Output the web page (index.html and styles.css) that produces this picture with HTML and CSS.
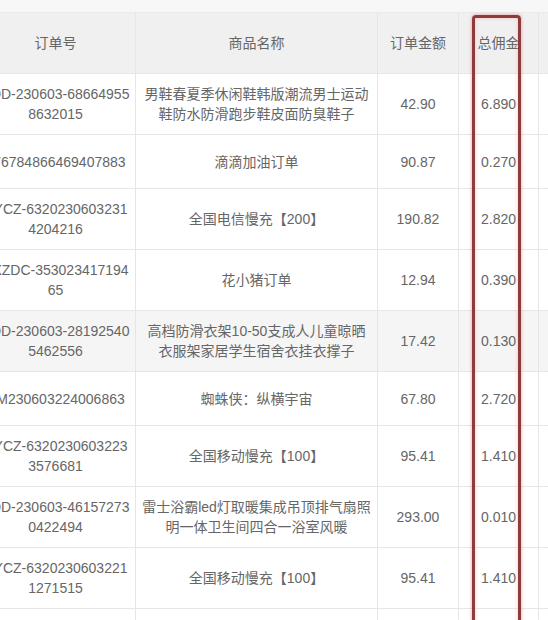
FILE: index.html
```html
<!DOCTYPE html>
<html lang="zh-CN">
<head>
<meta charset="utf-8">
<title>订单列表</title>
<link rel="stylesheet" href="styles.css">
</head>
<body>
<div class="page">
  <div class="top-strip"></div>
  <div class="table-wrap">
    <table class="orders">
      <colgroup>
        <col class="c-no"><col class="c-name"><col class="c-amt"><col class="c-com"><col class="c-fee">
      </colgroup>
      <thead>
        <tr>
          <th>订单号</th>
          <th>商品名称</th>
          <th>订单金额</th>
          <th>总佣金</th>
          <th>平台服务费</th>
        </tr>
      </thead>
      <tbody>
        <tr>
          <td>PDD-230603-686649558632015</td>
          <td>男鞋春夏季休闲鞋韩版潮流男士运动鞋防水防滑跑步鞋皮面防臭鞋子</td>
          <td>42.90</td><td>6.890</td><td>0.69</td>
        </tr>
        <tr>
          <td>176784866469407883</td>
          <td>滴滴加油订单</td>
          <td>90.87</td><td>0.270</td><td>0.03</td>
        </tr>
        <tr>
          <td>HYCZ-63202306032314204216</td>
          <td>全国电信慢充【200】</td>
          <td>190.82</td><td>2.820</td><td>0.28</td>
        </tr>
        <tr>
          <td>HXZDC-35302341719465</td>
          <td>花小猪订单</td>
          <td>12.94</td><td>0.390</td><td>0.04</td>
        </tr>
        <tr class="hover">
          <td>PDD-230603-281925405462556</td>
          <td>高档防滑衣架10-50支成人儿童晾晒衣服架家居学生宿舍衣挂衣撑子</td>
          <td>17.42</td><td>0.130</td><td>0.01</td>
        </tr>
        <tr>
          <td>DM230603224006863</td>
          <td>蜘蛛侠：纵横宇宙</td>
          <td>67.80</td><td>2.720</td><td>0.27</td>
        </tr>
        <tr>
          <td>HYCZ-63202306032233576681</td>
          <td>全国移动慢充【100】</td>
          <td>95.41</td><td>1.410</td><td>0.14</td>
        </tr>
        <tr>
          <td>PDD-230603-461572730422494</td>
          <td>雷士浴霸led灯取暖集成吊顶排气扇照明一体卫生间四合一浴室风暖</td>
          <td>293.00</td><td>0.010</td><td>0.00</td>
        </tr>
        <tr>
          <td>HYCZ-63202306032211271515</td>
          <td>全国移动慢充【100】</td>
          <td>95.41</td><td>1.410</td><td>0.14</td>
        </tr>
        <tr>
          <td>PDD-230603-735018264430917</td>
          <td>全国移动慢充【50】</td>
          <td>48.20</td><td>0.710</td><td>0.07</td>
        </tr>
      </tbody>
    </table>
  </div>
  <div class="highlight"></div>
</div>
</body>
</html>
```
FILE: styles.css
```css
html, body {
  margin: 0;
  padding: 0;
}
body {
  background: #f6f6f6;
  font-family: "Liberation Sans", "Noto Sans CJK SC", sans-serif;
  font-size: 14px;
  color: #666;
}
.page {
  position: relative;
  width: 548px;
  height: 620px;
  overflow: hidden;
}
.top-strip {
  height: 12px;
  background: #f7f7f7;
  border-bottom: 1px solid #ebebeb;
}
.table-wrap {
  overflow: hidden;
}
.orders {
  margin-left: -25px;
  border-collapse: collapse;
  table-layout: fixed;
  width: 643px;
}
.c-no { width: 160px; }
.c-name { width: 242px; }
.c-amt { width: 81px; }
.c-com { width: 80px; }
.c-fee { width: 80px; }

.orders th,
.orders td {
  border: 1px solid #e6e6e6;
  text-align: center;
  vertical-align: middle;
  line-height: 20px;
  font-weight: normal;
  word-break: break-all;
}
.orders th {
  height: 40px;
  padding: 10px 5px;
  background: #f0f0f0;
  color: #666;
  border-top: none;
}
.orders td {
  padding: 10px 5px;
  background: #fff;
}
.orders td:nth-child(2) {
  padding: 10px 6px;
}
.orders tbody tr {
  height: 54px;
}
.orders tr.hover td {
  background: #f5f5f5;
}
.highlight {
  position: absolute;
  left: 472px;
  top: 15px;
  width: 43px;
  height: 640px;
  border: 3px solid #8c3d3b;
  border-radius: 4px 4px 0 0;
  box-shadow: 0 0 3px 1px rgba(240, 140, 140, 0.55), inset 0 0 3px 1px rgba(245, 170, 170, 0.45);
  pointer-events: none;
}
```
